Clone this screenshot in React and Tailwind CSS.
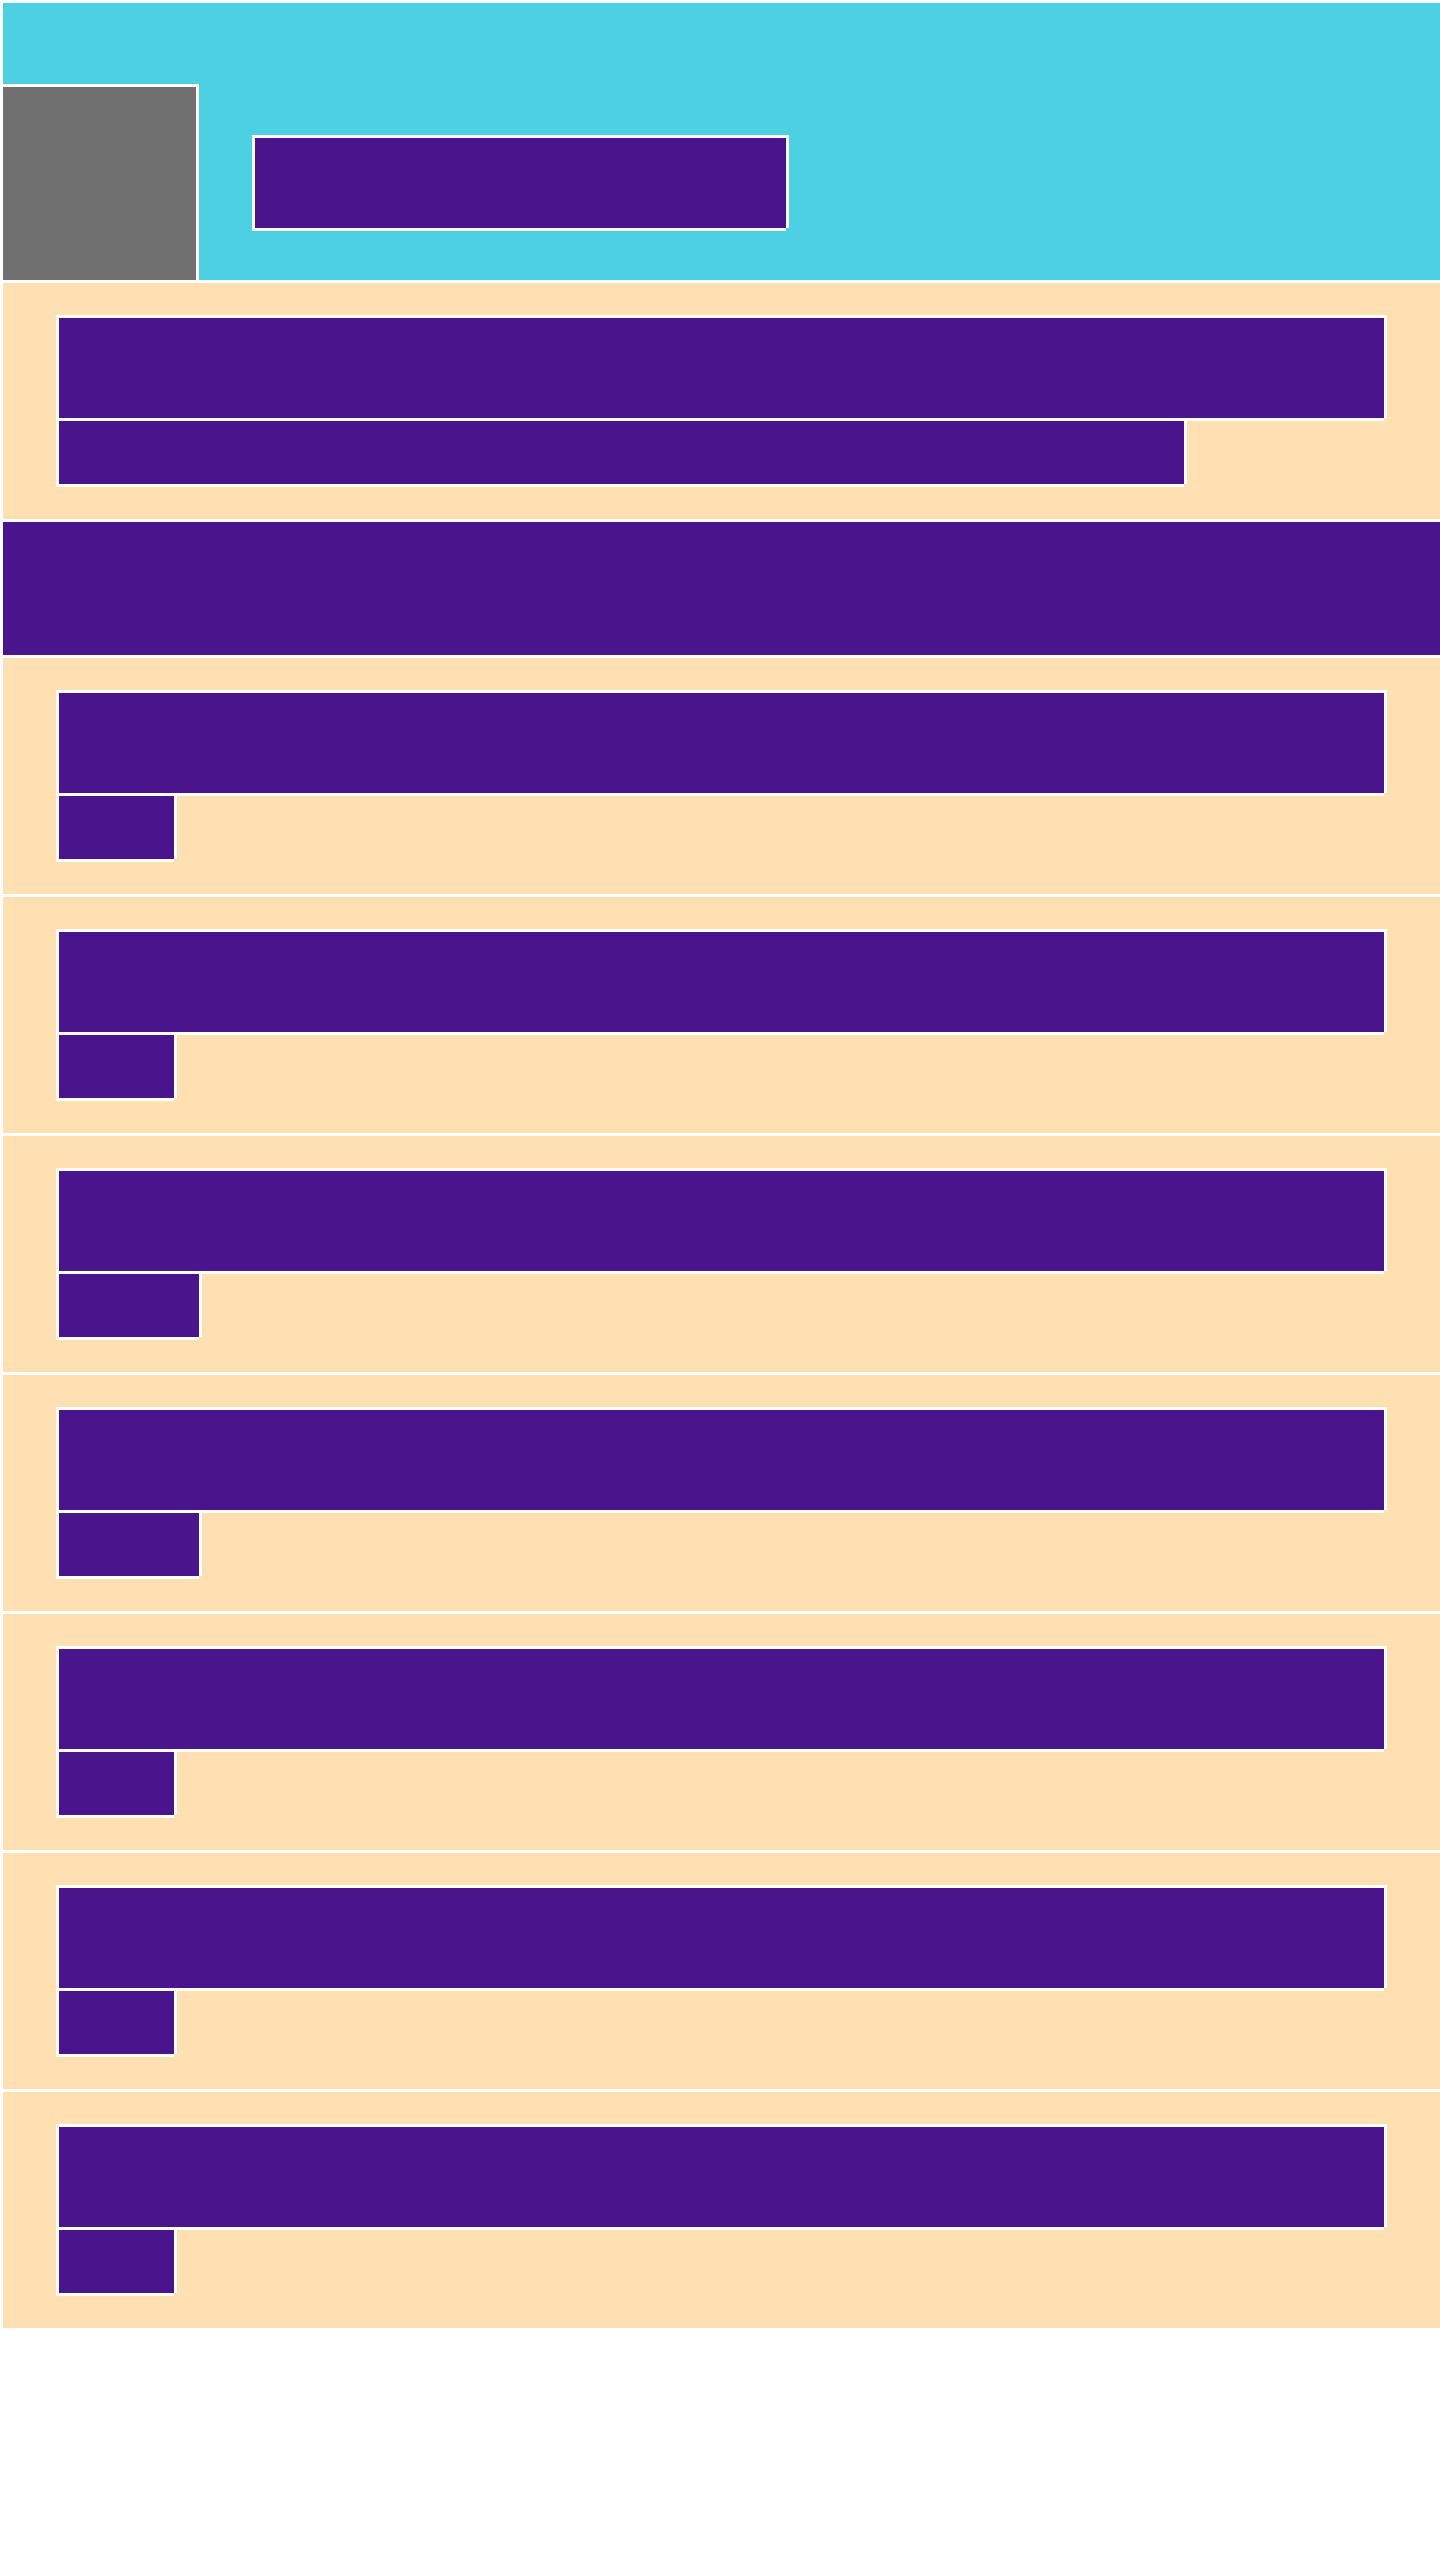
const outline =
  'bg-[#4a148c] shadow-[-3px_-3px_0_#fff,3px_-3px_0_#fff,-3px_3px_0_#fff,3px_0_0_#fff,0_3px_0_#fff]';

// width of the small block under each row's title
const rows = [
  { id: 1, metaWidth: 'w-[115px]' },
  { id: 2, metaWidth: 'w-[115px]' },
  { id: 3, metaWidth: 'w-[140px]' },
  { id: 4, metaWidth: 'w-[140px]' },
  { id: 5, metaWidth: 'w-[115px]' },
  { id: 6, metaWidth: 'w-[115px]' },
  { id: 7, metaWidth: 'w-[115px]' },
];

const Row = ({ metaWidth }) => (
  <section className="bg-[#ffe0b2] px-[56px] py-[35px]">
    <div className="flex flex-col gap-[3px]">
      <div className={`h-[100px] w-full ${outline}`} />
      <div className={`h-[63px] ${metaWidth} ${outline}`} />
    </div>
  </section>
);

export default function App() {
  return (
    <div className="min-h-[2560px] bg-white pl-[3px] pt-[3px]">
      <div className="flex flex-col gap-[3px]">
        {/* Header */}
        <header className="flex items-start bg-[#4dd0e1] pt-[84px]">
          <div className="h-[193px] w-[193px] shrink-0 bg-[#707070] shadow-[0_-3px_0_#fff,3px_-3px_0_#fff,3px_0_0_#fff]" />
          <div className={`ml-[59px] mt-[51px] h-[90px] w-[531px] ${outline}`} />
        </header>

        {/* Intro */}
        <Row metaWidth="w-[1125px]" />

        {/* Section banner */}
        <div className="h-[133px] bg-[#4a148c]" />

        {/* List */}
        {rows.map((row) => (
          <Row key={row.id} metaWidth={row.metaWidth} />
        ))}
      </div>
    </div>
  );
}
